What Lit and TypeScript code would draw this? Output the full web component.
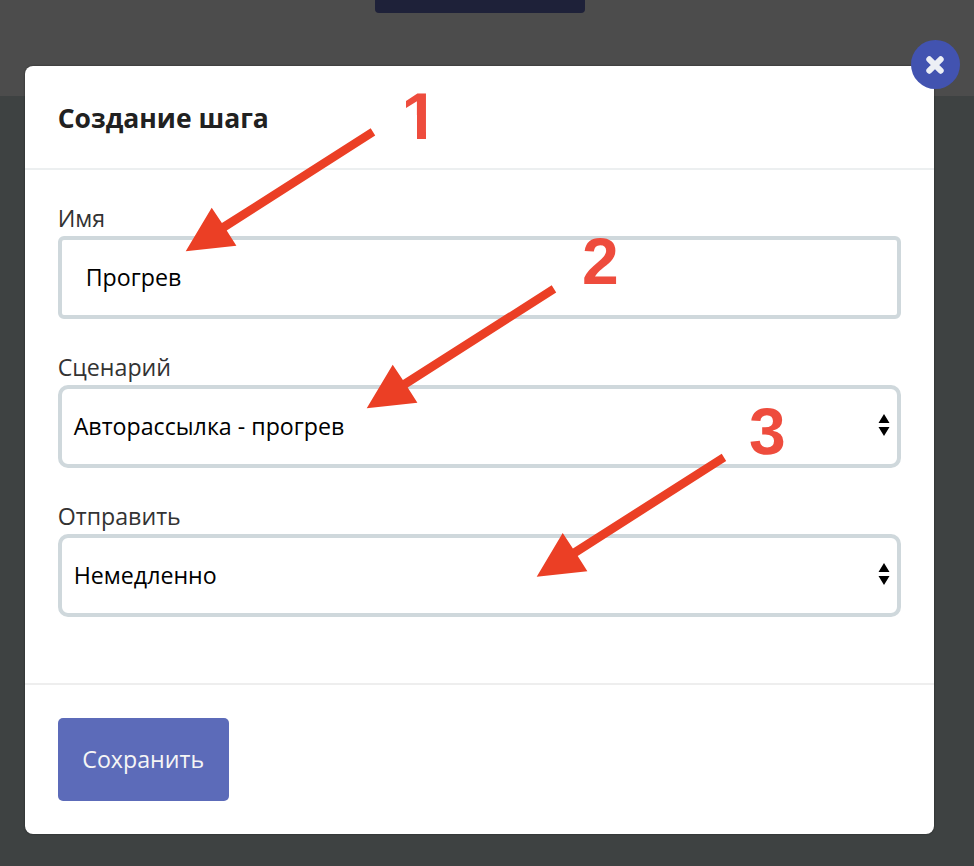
import { LitElement, html, css, svg } from "lit";
import { customElement, property } from "lit/decorators.js";

@customElement("form-field")
class FormField extends LitElement {
  @property() label = "";
  @property() value = "";
  @property() kind = "text";

  static styles = css`
    :host { display: block; height: 115px; }
    .label { display: block; height: 33.5px; line-height: 31px; color: #333; }
    .box {
      box-sizing: border-box; height: 82.5px; display: flex; align-items: center;
      justify-content: space-between; border: 4px solid #cfd8dc; border-radius: 6px;
      padding: 0 7px 2px 24px; color: #000; background: #fff;
    }
    .box.select { border-radius: 10px; padding: 0 7.5px 2px 12px; }
    .arrows { width: 12px; height: 22px; display: block; margin-bottom: 2px; }
  `;

  render() {
    const select = this.kind === "select";
    return html`
      <span class="label">${this.label}</span>
      <div class="box ${select ? "select" : ""}">
        <span>${this.value}</span>
        ${select
          ? html`<svg class="arrows" viewBox="0 0 12 22">
              <path d="M6 0 11.5 9H.5ZM.5 13h11L6 22Z" />
            </svg>`
          : ""}
      </div>
    `;
  }
}

const arrow = (x: number, y: number) => svg`
  <path class="arrow" transform="translate(${x} ${y})"
    d="M0 0 26-43.6 36.2-28.2 185-123 189.5-115.8 41-20.7 50.7-5.5Z" />`;

@customElement("app-root")
class AppRoot extends LitElement {
  static styles = css`
    :host {
      display: block; position: relative; box-sizing: border-box;
      width: 974px; height: 866px; overflow: hidden; background: #3e4242;
      font: 23.2px/32px "Open Sans", sans-serif;
    }
    .top { height: 96px; background: #4c4c4c; display: flex; justify-content: center; }
    .top-button { width: 210px; height: 13px; margin-right: 15px; background: #1e2139; border-radius: 0 0 4px 4px; }
    .modal {
      position: absolute; left: 24.7px; top: 65.5px; width: 909.8px; height: 768px;
      display: flex; flex-direction: column; background: #fff; border-radius: 8px;
      box-shadow: 0 0 2px rgba(0, 0, 0, 0.5);
    }
    .header {
      box-sizing: border-box; height: 104.5px; padding: 2px 33px 0; display: flex; align-items: center;
      border-bottom: 2px solid #eceff0; font-size: 26.5px; font-weight: 700; color: #212121;
    }
    .body {
      box-sizing: border-box; height: 515px; padding: 33px 33px 0; display: flex;
      flex-direction: column; gap: 34px; border-bottom: 2px solid #eeeeee;
    }
    .footer { padding: 33px; }
    .save {
      display: block; box-sizing: border-box; width: 171px; height: 83px; margin: 0; padding: 0;
      border: 0; border-radius: 5px; background: #5c6bb9; color: #f5f5f5; font: inherit;
    }
    .close {
      position: absolute; left: 910.5px; top: 39.5px; width: 49.5px; height: 49.5px;
      padding: 2px 1px 0 0; border: 0; border-radius: 50%; background: #4253b0;
      display: flex; align-items: center; justify-content: center;
    }
    .close svg { width: 20px; height: 20px; }
    .notes { position: absolute; inset: 0; width: 974px; height: 866px; pointer-events: none; }
    .arrow { fill: #eb3f25; }
    .digit { fill: #ee4c3d; font: 700 66px "Liberation Sans", sans-serif; text-rendering: geometricPrecision; }
  `;

  render() {
    return html`
      <div class="top"><div class="top-button"></div></div>
      <section class="modal">
        <div class="header">Создание шага</div>
        <div class="body">
          <form-field label="Имя" value="Прогрев"></form-field>
          <form-field label="Сценарий" value="Авторассылка - прогрев" kind="select"></form-field>
          <form-field label="Отправить" value="Немедленно" kind="select"></form-field>
        </div>
        <div class="footer"><button class="save">Сохранить</button></div>
      </section>
      <button class="close" aria-label="Закрыть">
        <svg viewBox="0 0 20 20">
          <path d="M4.3 4.3 15.7 15.7M15.7 4.3 4.3 15.7" fill="none" stroke="#eceff5" stroke-width="6" stroke-linecap="round" />
        </svg>
      </button>
      <svg class="notes" viewBox="0 0 974 866">
        <defs>
          <clipPath id="stem"><path d="M400 85H426V145H417V115H400Z" /></clipPath>
        </defs>
        ${arrow(185.7, 251.3)} ${arrow(366.7, 408.3)} ${arrow(536.7, 576.7)}
        <text class="digit" x="401.5" y="139" clip-path="url(#stem)">1</text>
        <text class="digit" x="582" y="283.5">2</text>
        <text class="digit" x="749" y="453.5">3</text>
      </svg>
    `;
  }
}
